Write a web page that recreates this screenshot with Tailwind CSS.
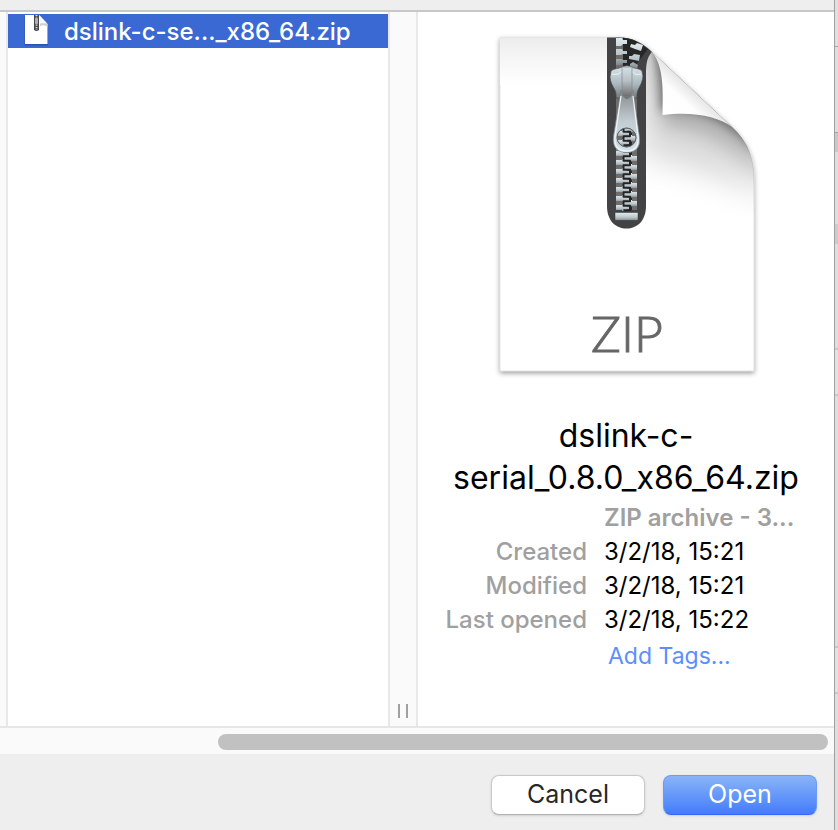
<!DOCTYPE html>
<html lang="en">
<head>
<meta charset="utf-8">
<meta name="viewport" content="width=device-width, initial-scale=1">
<title>Open</title>
<script src="https://cdn.jsdelivr.net/npm/@tailwindcss/browser@4"></script>
</head>
<body class="flex min-h-screen bg-[#dedede] font-[Inter,'Liberation_Sans',sans-serif] text-black">
<div class="flex min-w-0 flex-1 flex-col bg-[#eeeeee]">
  <header class="h-3 shrink-0 border-b-2 border-[#c8c8c8]"></header>

  <main class="flex min-h-0 flex-1">
    <div class="w-2 shrink-0 border-r-2 border-[#e8e8e8] bg-[#fafafa]"></div>

    <section class="min-w-0 flex-1 bg-white pt-0.5" aria-label="Files">
      <ul>
        <li>
          <button type="button" class="flex h-[34px] w-full items-center gap-4 bg-[#3b69d3] pt-px pl-2 text-left text-2xl font-medium text-white">
            <svg class="h-[34px] w-8 shrink-0" viewBox="0 0 32 34" aria-hidden="true">
              <path d="M8.500 1H24L32 9.500V30.500H8.500Z" fill="#2549a0" opacity=".7"/>
              <path d="M9 0H23L31.500 9V29H9Z" fill="#fff"/>
              <path d="M23 0C25 3 24 6 24 11C27 9.500 29 10 31.500 12V9Z" fill="#cfcfcf"/>
              <path d="M23 0C25 3 24 6 24 8.500C26 8 28 8.500 31 8.500Z" fill="#fafafa"/>
              <path d="M18 0H23V15Q20.500 17 18 15Z" fill="#454545"/>
              <path d="M20.500 0V15" stroke="#d8dde0" stroke-width="2" stroke-dasharray="1.200 1.200"/>
              <rect x="19" y="3" width="3" height="6" rx="1" fill="#aab2b6"/>
            </svg>
            <span class="truncate">dslink-c-se..._x86_64.zip</span>
          </button>
        </li>
      </ul>
    </section>

    <div class="flex w-[30px] shrink-0 items-end justify-center gap-1.5 border-x-2 border-[#e8e8e8] bg-[#fafafa] pb-2" role="separator" aria-orientation="vertical">
      <span class="h-3.5 w-0.5 bg-[#a0a0a0]"></span>
      <span class="h-3.5 w-0.5 bg-[#a0a0a0]"></span>
    </div>

    <section class="flex w-1/2 max-w-[416px] shrink-0 flex-col items-center bg-white pt-2" aria-label="Preview">
      <svg class="h-[370px] w-[300px] shrink-0" viewBox="-4 0 300 370" role="img" aria-label="ZIP archive">
        <defs>
          <filter id="shadow" x="-10%" y="-10%" width="120%" height="120%"><feDropShadow dx="0" dy="2" stdDeviation="2.500" flood-color="#000" flood-opacity=".4"/></filter>
          <filter id="soft" x="-50%" y="-50%" width="200%" height="200%"><feGaussianBlur stdDeviation="16"/></filter>
          <filter id="soft2" x="-50%" y="-50%" width="200%" height="200%"><feGaussianBlur stdDeviation="5"/></filter>
          <filter id="soft3" x="-50%" y="-50%" width="200%" height="200%"><feGaussianBlur stdDeviation="9"/></filter>
          <linearGradient id="topShade" x1="0" y1="0" x2="0" y2="1"><stop offset="0" stop-color="#ececec"/><stop offset=".5" stop-color="#f7f7f7"/><stop offset="1" stop-color="#fff"/></linearGradient>
          <linearGradient id="fold" gradientUnits="userSpaceOnUse" x1="185" y1="94" x2="213" y2="64"><stop offset="0" stop-color="#fff"/><stop offset=".55" stop-color="#fdfdfd"/><stop offset="1" stop-color="#dedede"/></linearGradient>
          <linearGradient id="slider" x1="0" y1="0" x2="0" y2="1"><stop offset="0" stop-color="#dbe6ec"/><stop offset=".55" stop-color="#aebac1"/><stop offset="1" stop-color="#77797a"/></linearGradient>
          <linearGradient id="bridge" x1="0" y1="0" x2="0" y2="1"><stop offset="0" stop-color="#d4dfe5"/><stop offset=".45" stop-color="#b7c1c6"/><stop offset="1" stop-color="#6d6b6a"/></linearGradient>
          <linearGradient id="pull" x1="0" y1="0" x2="0" y2="1"><stop offset="0" stop-color="#858789"/><stop offset=".5" stop-color="#c1cdd3"/><stop offset="1" stop-color="#d6e1e7"/></linearGradient>
          <linearGradient id="metal" x1="0" y1="0" x2="0" y2="1"><stop offset="0" stop-color="#e3ebef"/><stop offset=".6" stop-color="#b9c5cb"/><stop offset="1" stop-color="#82888b"/></linearGradient>
          <clipPath id="page"><path d="M20 17.500H138C153 17.500 163 23 172 32L252 107C267 121 274 136 274 160V351H20Z"/></clipPath>
          <g id="toothL"><path d="M136 0H142V-1H147V1.500H150V4.500H147V6H142V5H136Z" fill="url(#metal)"/></g>
          <g id="toothR"><path d="M157 0H152V-1H147.500V1H144V4H147.500V5.500H152V5H157Z" fill="url(#metal)"/></g>
        </defs>
        <path d="M20 17.500H138C153 17.500 163 23 172 32L252 107C267 121 274 136 274 160V351H20Z" fill="#fff" stroke="#c4c4c4" stroke-width=".5" filter="url(#shadow)"/>
        <g clip-path="url(#page)">
          <rect x="20" y="17" width="150" height="48" fill="url(#topShade)"/>
          <path d="M160 30L252 107L300 180C250 160 205 145 160 135Z" fill="#000" opacity=".15" filter="url(#soft)"/>
          <path d="M166 30L185 105C220 105 250 122 290 165L265 90L175 20Z" fill="#000" opacity=".22" filter="url(#soft3)"/>
          <path d="M170 25C181 50 181 78 181 90C215 88 245 96 280 138L265 90L175 20Z" fill="#000" opacity=".42" filter="url(#soft2)"/>
          <path d="M127 17H180L171 33C167 38 166 44 166 55V186C166 201 157 208.500 146.500 208.500C136 208.500 127 201 127 186Z" fill="#434244"/>
          <path d="M136 17H157V190H136Z" fill="#6f6c6a"/>
          <path d="M143 17H150L168 29L152 50V190H143Z" fill="#272728"/>
          <path d="M136 18H142L143 20H147V24H143L141 26H136ZM136 29H142L143 31H147V34H143L141 35H136ZM136 39H142L143 40H147V43H143L141 45H136Z" fill="url(#metal)"/>
          <path d="M163 25L157 23L155 25L151 24L150 27L155 29L161 31ZM160 35L154 34L152 36L149 36V39L154 40L159 41ZM158 45L153 42L150 44V47L157 49Z" fill="url(#metal)"/>
        </g>
        <path d="M172 32C184 46 183 72 182.500 95C212 91 238 96 252 107Z" fill="url(#fold)"/>
        <g>
          <use href="#toothR" y="98"/><use href="#toothR" y="107"/><use href="#toothR" y="116"/>
          <use href="#toothL" y="102"/><use href="#toothL" y="111"/><use href="#toothL" y="120"/>
          <use href="#toothL" y="131"/><use href="#toothL" y="140"/><use href="#toothL" y="149"/><use href="#toothL" y="158"/><use href="#toothL" y="167"/><use href="#toothL" y="176"/><use href="#toothL" y="185"/>
          <use href="#toothR" y="136"/><use href="#toothR" y="145"/><use href="#toothR" y="154"/><use href="#toothR" y="163"/><use href="#toothR" y="172"/><use href="#toothR" y="181"/>
          <path d="M150 107.300H143.500V111.800H150V116.300H143.500V120.800H150V125.300H143.500M143.500 131.700H150V136.200H143.500V140.700H150V145.200H143.500V149.700H150V154.200H143.500V158.700H150V163.200H143.500V167.700H150V172.200H143.500V176.700H150V181.200H143.500V185.700H150V190.200H143.500" fill="none" stroke="#242425" stroke-width="2" stroke-linejoin="round"/>
          <rect x="135" y="192.500" width="23" height="8" rx=".5" fill="url(#metal)" stroke="#343435" stroke-width=".5"/>
        </g>
        <path d="M131 51C134 48 139 49 143 46.500Q147 45 151 46.500C154 49 160 48 162 51L163 56C162 67 156 68 157 78H136C137 68 131 68 130 57Z" fill="url(#slider)" stroke="#4c4d4f" stroke-width=".7"/>
        <path d="M132 54C138 55 139 54 142 51M161 54C155 55 154 54 152 51" fill="none" stroke="#edf4f7" stroke-width="1"/>
        <path d="M142 47H152V77H142Z" fill="url(#bridge)" stroke="#7f898e" stroke-width=".7"/>
        <path fill-rule="evenodd" d="M141 70L142.500 76Q147 81 151.500 76L153 70L159.500 117C161 130 153 132.500 146.500 132.500C139 132.500 132 129 133.500 116ZM146.500 108A9.500 9.500 0 1 0 146.500 127A9.500 9.500 0 1 0 146.500 108Z" fill="url(#pull)" stroke="#77828a" stroke-width=".7"/>
        <path d="M141 76L135 117C134 127 139 131 146.500 131C154 131 159 127 158 117L153 76" fill="none" stroke="#eef5f8" stroke-width="1.200"/>
        <circle cx="146.500" cy="117.500" r="9.500" fill="none" stroke="#53585b" stroke-width=".8"/>
        <text x="147" y="332" text-anchor="middle" font-family="Lato, sans-serif" font-size="50" font-weight="300" fill="#666" stroke="#666" stroke-width="1">ZIP</text>
      </svg>

      <h1 class="mt-[25px] w-full px-6 text-center text-[32px] leading-[42px]">dslink-c-<br>serial_0.8.0_x86_64.zip</h1>

      <div class="w-full pt-0.5 pb-[50px] text-2xl leading-[34px]">
        <p class="truncate pr-6 pl-[186px] font-semibold text-[#a0a0a0]">ZIP archive - 3...</p>
        <dl class="grid grid-cols-[169px_1fr] gap-x-[17px]">
          <dt class="text-right font-medium whitespace-nowrap text-[#a0a0a0]">Created</dt>
          <dd>3/2/18, 15:21</dd>
          <dt class="text-right font-medium whitespace-nowrap text-[#a0a0a0]">Modified</dt>
          <dd>3/2/18, 15:21</dd>
          <dt class="text-right font-medium whitespace-nowrap text-[#a0a0a0]">Last opened</dt>
          <dd>3/2/18, 15:22</dd>
        </dl>
        <p class="pt-0.5 pl-[190px] text-[23px]"><a href="#tags" class="text-[#5b8ff9]">Add Tags...</a></p>
      </div>
    </section>
  </main>

  <div class="h-7 shrink-0 border-t-2 border-[#e6e6e6] bg-[#fafafa] pt-1.5 pr-1.5 pl-[218px]">
    <div class="h-4 rounded-full bg-[#c1c1c1]"></div>
  </div>

  <footer class="flex h-[76px] shrink-0 items-start justify-end gap-[18px] pt-[21px] pr-[17px] text-[25px]">
    <button type="button" class="h-10 w-[154px] rounded-lg border border-[#c8c8c8] border-b-[#b0b0b0] bg-white text-[#272727] shadow-sm">Cancel</button>
    <button type="button" class="h-10 w-[154px] rounded-lg border border-[#6a9af5] border-b-[#3467f5] bg-linear-to-b from-[#8ab3f6] to-[#447bfb] text-white shadow-sm">Open</button>
  </footer>
</div>

<aside class="flex w-1 shrink-0 flex-col border-l border-[#a0a0a0]" aria-hidden="true">
  <div class="h-[47px] border-b border-[#a8a8a8] bg-[#e0e0e0]"></div>
  <div class="h-[86px] border-b border-[#a8a8a8]"></div>
  <div class="h-[19px] bg-[#c8c8c8]"></div>
  <div class="h-[72px]"></div>
  <div class="h-5 bg-[#cccccc]"></div>
  <div class="h-[106px] border-b-2 border-[#c8c8c8]"></div>
  <div class="h-[46px] border-b-2 border-[#c8c8c8] bg-[#e2e2e2]"></div>
  <div class="h-[252px] border-b-2 border-[#c8c8c8]"></div>
  <div class="h-[46px] border-b-2 border-[#c8c8c8] bg-[#e2e2e2]"></div>
</aside>
</body>
</html>
